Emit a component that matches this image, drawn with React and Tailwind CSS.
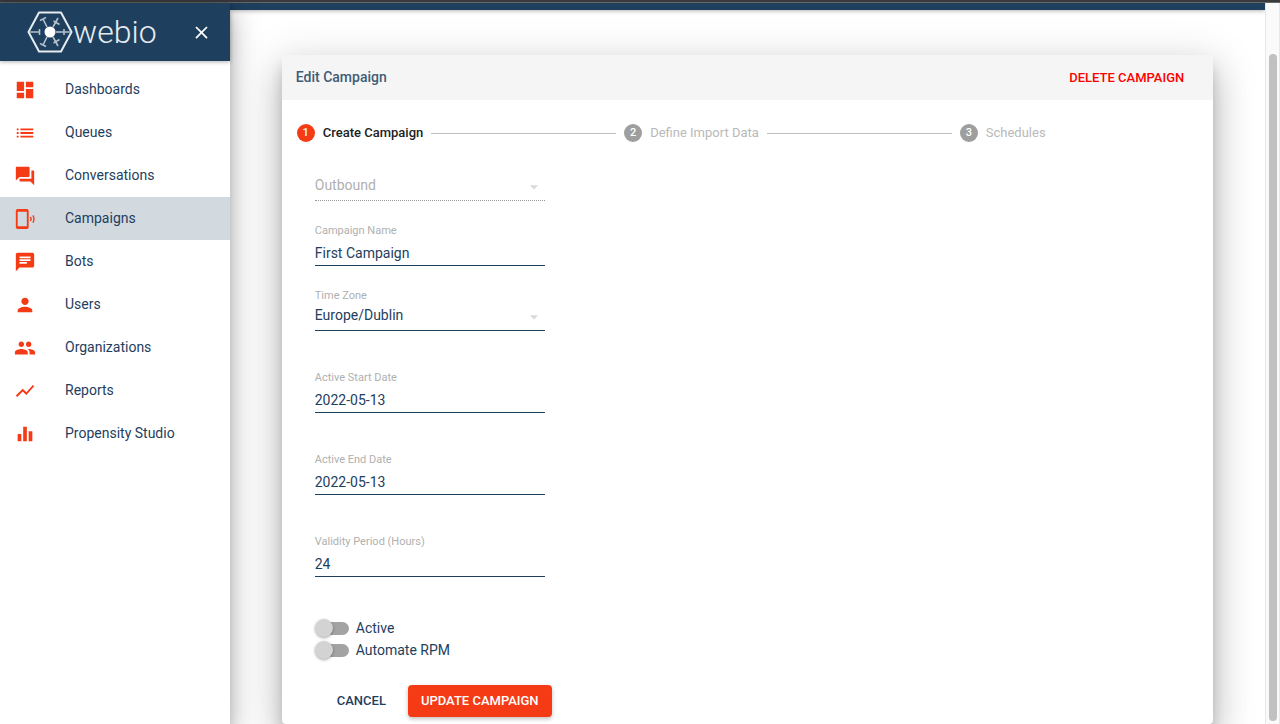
import React, { useState } from 'react';
import {
  MdArrowDropDown,
  MdChat,
  MdClose,
  MdDashboard,
  MdEqualizer,
  MdList,
  MdPeople,
  MdPerson,
  MdQuestionAnswer,
  MdShowChart
} from 'react-icons/md';

const CampaignIcon = ({ className }) => (
  <svg viewBox="0 0 24 24" fill="currentColor" className={className} aria-hidden="true">
    <path d="M4 1h10a2 2 0 0 1 2 2v18a2 2 0 0 1-2 2H4a2 2 0 0 1-2-2V3a2 2 0 0 1 2-2zM4 4v16h10V4H4z" />
    <path d="M18 9.800q1.500 2.200 0 4.400M20.600 8q2.400 4 0 8" fill="none" stroke="currentColor" strokeWidth="1.500" />
  </svg>
);

const navItems = [
  { label: 'Dashboards', icon: MdDashboard },
  { label: 'Queues', icon: MdList },
  { label: 'Conversations', icon: MdQuestionAnswer },
  { label: 'Campaigns', icon: CampaignIcon, active: true },
  { label: 'Bots', icon: MdChat },
  { label: 'Users', icon: MdPerson },
  { label: 'Organizations', icon: MdPeople },
  { label: 'Reports', icon: MdShowChart },
  { label: 'Propensity Studio', icon: MdEqualizer }
];

const steps = ['Create Campaign', 'Define Import Data', 'Schedules'];

const Logo = () => (
  <div className="flex items-center">
    <svg viewBox="0 0 46 42" className="w-[46px] h-[42px]" fill="none" stroke="#e6ebf0" aria-hidden="true">
      <path d="M12 1.500h22L44.500 21 34 40.500H12L1.500 21z" strokeWidth="2" strokeLinejoin="round" />
      <g strokeWidth="1.600" stroke="#b4c1cd">
        <path d="M2 21h10M34 21h10M20 16l-4-8M26 16l5-9M20 26l-4 8M26 26l5 9" />
        <path d="M12.500 18v6M37 18v6M13 9.500l6-3M26.500 10l6 3.500M13 32.500l6 3M26.500 32l6-3.500" />
        <path d="M29 21h5" />
      </g>
      <circle cx="23" cy="21" r="5.500" fill="#fff" stroke="none" />
    </svg>
    <span className="font-[Roboto,sans-serif] font-light text-[32px] leading-[42px] text-[#e6ebf0]">
      webio
    </span>
  </div>
);

const Sidebar = () => (
  <aside className="relative z-20 w-[230px] shrink-0 bg-white shadow-[0_8px_12px_-2px_rgba(0,0,0,0.2),0_16px_24px_2px_rgba(0,0,0,0.14),0_6px_30px_5px_rgba(0,0,0,0.12)]">
    <div className="flex items-center justify-between h-[58px] pl-[27px] pr-[18px] bg-[#1e405e] shadow-[0_1px_4px_rgba(0,0,0,0.3)]">
      <Logo />
      <button type="button" aria-label="Close menu" className="text-white">
        <MdClose className="w-[21px] h-[21px]" />
      </button>
    </div>
    <nav className="pt-[7px]">
      {navItems.map(({ label, icon: Icon, active }) => (
        <a
          key={label}
          href="#"
          className={`flex items-center h-[43px] pl-[14px] text-[14px] text-[#1e405e] ${active ? 'bg-[#d2d9df]' : ''}`}
        >
          <Icon className="w-[22px] h-[22px] mr-[29px] text-[#f43b16]" />
          {label}
        </a>
      ))}
    </nav>
  </aside>
);

const Stepper = () => (
  <ol className="flex items-center gap-2 h-[66px] pl-[15px] pr-[18%] text-[13px]">
    {steps.map((step, i) => (
      <React.Fragment key={step}>
        {i > 0 && <li aria-hidden="true" className="flex-1 h-px bg-[#bdbdbd]"></li>}
        <li className={`flex items-center gap-2 ${i === 0 ? 'font-medium text-[#212121]' : 'text-[#b9b9b9]'}`}>
          <span
            className={`flex items-center justify-center w-[18px] h-[18px] rounded-full text-[11px] font-medium text-white ${
              i === 0 ? 'bg-[#f43b16]' : 'bg-[#9e9e9e]'
            }`}
          >
            {i + 1}
          </span>
          {step}
        </li>
      </React.Fragment>
    ))}
  </ol>
);

const TextField = ({ id, label, value, onChange }) => (
  <div>
    <label htmlFor={id} className="block text-[11px] leading-[14px] text-[#b0b0b0]">{label}</label>
    <input
      id={id}
      type="text"
      value={value}
      onChange={(e) => onChange(e.target.value)}
      className="block w-full h-[28px] pt-[2px] text-[14px] text-[#1e405e] border-b border-[#1e405e] outline-none"
    />
  </div>
);

const SelectField = ({ id, label, options, disabled }) => (
  <div>
    {label && <label htmlFor={id} className="block text-[11px] leading-[14px] text-[#b0b0b0]">{label}</label>}
    <div className="relative">
      <select
        id={id}
        disabled={disabled}
        aria-label={label ? undefined : 'Campaign type'}
        className="block w-full h-[28px] pb-[2px] appearance-none text-[14px] text-[#1e405e] border-b border-[#1e405e] outline-none disabled:opacity-100 disabled:text-[#b0b0b0] disabled:border-dotted disabled:border-[#999999]"
      >
        {options.map((option) => (
          <option key={option}>{option}</option>
        ))}
      </select>
      <MdArrowDropDown className="absolute right-px top-1 w-[20px] h-[20px] text-[#d9d9d9] pointer-events-none" />
    </div>
  </div>
);

const Toggle = ({ label, checked, onChange }) => (
  <label className="flex items-center h-[22px] gap-[7px] text-[14px] text-[#1e405e]">
    <input
      type="checkbox"
      checked={checked}
      onChange={(e) => onChange(e.target.checked)}
      className="relative appearance-none w-[34px] h-[18px] before:absolute before:left-[2px] before:top-[3px] before:w-[32px] before:h-[13px] before:rounded-full before:bg-[#a3a3a3] after:absolute after:left-0 after:top-0 after:w-[18px] after:h-[18px] after:rounded-full after:bg-[#d3d3d3] after:shadow-[0_1px_3px_rgba(0,0,0,0.35)] checked:before:bg-[#f9a18d] checked:after:left-[16px] checked:after:bg-[#f43b16]"
    />
    {label}
  </label>
);

const App = () => {
  const [form, setForm] = useState({
    name: 'First Campaign',
    startDate: '2022-05-13',
    endDate: '2022-05-13',
    validity: '24',
    active: false,
    automateRpm: false
  });

  const update = (key) => (value) => setForm({ ...form, [key]: value });

  return (
    <div className="flex flex-col h-screen overflow-hidden bg-white font-[Roboto,sans-serif]">
      <div className="h-[3px] shrink-0 bg-[#3a3a3c] border-b border-[#666666]"></div>
      <div className="flex flex-1 min-h-0">
        <Sidebar />

        <main className="flex-1 min-w-0 overflow-hidden">
          {/* App bar */}
          <div className="h-[7px] bg-[#1e405e] shadow-[0_1px_4px_rgba(0,0,0,0.3)]"></div>

          {/* Campaign card */}
          <section className="w-[90%] mx-auto mt-[45px] pb-[7px] rounded bg-white shadow-[0_10px_14px_-2px_rgba(0,0,0,0.2),0_22px_34px_3px_rgba(0,0,0,0.14),0_8px_42px_7px_rgba(0,0,0,0.12)]">
            <header className="flex items-center justify-between h-[45px] pl-[14px] pr-[29px] rounded-t bg-[#f5f5f5]">
              <h1 className="text-[14px] font-medium text-[#3f5c76]">Edit Campaign</h1>
              <button type="button" className="text-[13px] font-medium text-[#ff0000]">DELETE CAMPAIGN</button>
            </header>

            <Stepper />

            <form className="px-[33px] pt-[7px]" onSubmit={(e) => e.preventDefault()}>
              <div className="flex flex-col gap-10 w-[230px]">
                <div className="flex flex-col gap-[23px]">
                  <SelectField id="type" options={['Outbound', 'Inbound']} disabled />
                  <TextField id="name" label="Campaign Name" value={form.name} onChange={update('name')} />
                  <SelectField id="timezone" label="Time Zone" options={['Europe/Dublin', 'Europe/London']} />
                </div>
                <TextField id="start" label="Active Start Date" value={form.startDate} onChange={update('startDate')} />
                <TextField id="end" label="Active End Date" value={form.endDate} onChange={update('endDate')} />
                <TextField id="validity" label="Validity Period (Hours)" value={form.validity} onChange={update('validity')} />
                <div>
                  <Toggle label="Active" checked={form.active} onChange={update('active')} />
                  <Toggle label="Automate RPM" checked={form.automateRpm} onChange={update('automateRpm')} />
                </div>
              </div>

              <div className="flex mt-6 gap-[9px] pl-[9px]">
                <button type="button" className="h-8 px-[13px] text-[13px] font-medium text-[#1e405e]">CANCEL</button>
                <button
                  type="submit"
                  className="h-8 px-[13px] rounded-sm bg-[#f43b16] text-[13px] font-medium text-white shadow-[0_2px_4px_rgba(0,0,0,0.25)]"
                >
                  UPDATE CAMPAIGN
                </button>
              </div>
            </form>
          </section>
        </main>

        {/* Scrollbar */}
        <div className="relative z-10 flex justify-center w-[15px] shrink-0 pt-[51px] pb-[3px] bg-[#fafafa] border-x border-[#e8e8e8]">
          <div className="w-2 rounded-full bg-[#c1c1c1]"></div>
        </div>
      </div>
    </div>
  );
};

export default App;
